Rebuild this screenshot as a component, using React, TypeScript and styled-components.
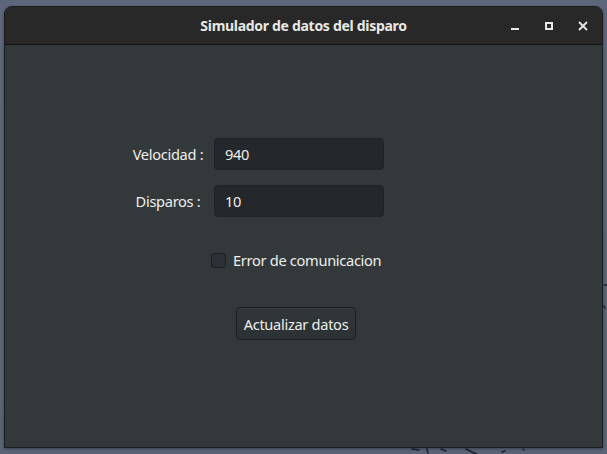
import React from "react";
import styled, { createGlobalStyle } from "styled-components";

const Global = createGlobalStyle`
  html, body { margin: 0; padding: 0; }
  body {
    width: 607px; height: 454px; overflow: hidden;
    background: #5c6579;
    font-family: "Noto Sans", "Open Sans", "DejaVu Sans", sans-serif;
  }
`;

const Desktop = styled.div`
  position: relative;
  width: 607px;
  height: 454px;
  padding: 6px 0 0 4px;
  box-sizing: border-box;
  background: linear-gradient(180deg, #5d667a 0%, #5a6377 100%);
`;

const Wallpaper = styled.svg`
  position: absolute;
  left: 0;
  top: 0;
`;

const Window = styled.div`
  position: relative;
  width: 599px;
  height: 442px;
  box-sizing: border-box;
  border: 1px solid #1a1c1d;
  border-radius: 8px 8px 0 0;
  overflow: hidden;
  display: flex;
  flex-direction: column;
  background: #33393b;
  box-shadow: 0 1px 3px rgba(0,0,0,0.35);
`;

const TitleBar = styled.div`
  height: 37px;
  flex: none;
  background: #282828;
  border-bottom: 1px solid #121212;
  display: flex;
  align-items: center;
  position: relative;
  color: #e8e8e6;
`;

const Title = styled.div`
  flex: 1;
  text-align: center;
  font-weight: 700;
  font-size: 14px;
  letter-spacing: -0.3px;
`;

const Controls = styled.div`
  position: absolute;
  right: 2px;
  top: 0;
  height: 37px;
  display: flex;
  align-items: center;
`;

const CtlButton = styled.div`
  width: 34px;
  height: 37px;
  display: flex;
  align-items: center;
  justify-content: center;
`;

const Body = styled.div`
  flex: 1;
  display: flex;
  flex-direction: column;
  align-items: flex-start;
  padding-top: 93px;
  color: #eeeeec;
  font-size: 14.6px;
  letter-spacing: -0.3px;
`;

const Form = styled.div`
  display: grid;
  grid-template-columns: 80px 170px;
  column-gap: 6px;
  row-gap: 15px;
  margin-left: 123px;
`;

const Label = styled.div`
  height: 32px;
  display: flex;
  align-items: center;
  justify-content: center;
  white-space: nowrap;
`;

const Entry = styled.div`
  height: 32px;
  box-sizing: border-box;
  background: #24282a;
  border: 1px solid #1f2325;
  border-radius: 4px;
  display: flex;
  align-items: center;
  padding-left: 10px;
  color: #eeeeec;
`;

const CheckRow = styled.label`
  display: flex;
  align-items: center;
  gap: 7px;
  margin-left: 206px;
  margin-top: 33px;
  height: 20px;
`;

const Box = styled.span`
  width: 15px;
  height: 15px;
  box-sizing: border-box;
  background: #2c3234;
  border: 1px solid #1b1f20;
  border-radius: 3px;
`;

const Button = styled.button`
  margin-left: 231px;
  margin-top: 37px;
  width: 120px;
  height: 33px;
  box-sizing: border-box;
  border: 1px solid #1b1f20;
  border-radius: 4px;
  background: linear-gradient(180deg, #30363a 0%, #2c3234 100%);
  color: #eeeeec;
  font: inherit;
  font-size: 14.6px;
  letter-spacing: -0.3px;
  padding: 0;
  box-shadow: inset 0 1px rgba(255,255,255,0.03);
`;

export default function App() {
  return (
    <>
      <Global />
      <Desktop>
        <Wallpaper width="607" height="454" viewBox="0 0 607 454">
          <g stroke="#1c2230" strokeWidth="1.6" strokeLinecap="round" fill="none">
            <path d="M412 449 L419 450" />
            <path d="M427 449 L428 453" />
            <path d="M441 449 L446 451" />
            <path d="M466 449 L472 452 L477 454" />
            <path d="M502 452 L505 451" />
            <path d="M523 449 L524 450" />
            <path d="M604 285 L607 285" />
            <path d="M604 306 L605 308" />
          </g>
        </Wallpaper>
        <Window>
          <TitleBar>
            <Title>Simulador de datos del disparo</Title>
            <Controls>
              <CtlButton>
                <svg width="10" height="10" viewBox="0 0 10 10">
                  <rect x="1" y="7" width="8" height="2" fill="#e8e8e6" />
                </svg>
              </CtlButton>
              <CtlButton>
                <svg width="10" height="10" viewBox="0 0 10 10">
                  <rect x="2" y="2" width="6" height="6" fill="none" stroke="#e8e8e6" strokeWidth="2" />
                </svg>
              </CtlButton>
              <CtlButton>
                <svg width="10" height="10" viewBox="0 0 10 10">
                  <path d="M1 1 L9 9 M9 1 L1 9" stroke="#e8e8e6" strokeWidth="1.8" />
                </svg>
              </CtlButton>
            </Controls>
          </TitleBar>
          <Body>
            <Form>
              <Label>Velocidad :</Label>
              <Entry>940</Entry>
              <Label>Disparos :</Label>
              <Entry>10</Entry>
            </Form>
            <CheckRow>
              <Box />
              <span>Error de comunicacion</span>
            </CheckRow>
            <Button>Actualizar datos</Button>
          </Body>
        </Window>
      </Desktop>
    </>
  );
}
